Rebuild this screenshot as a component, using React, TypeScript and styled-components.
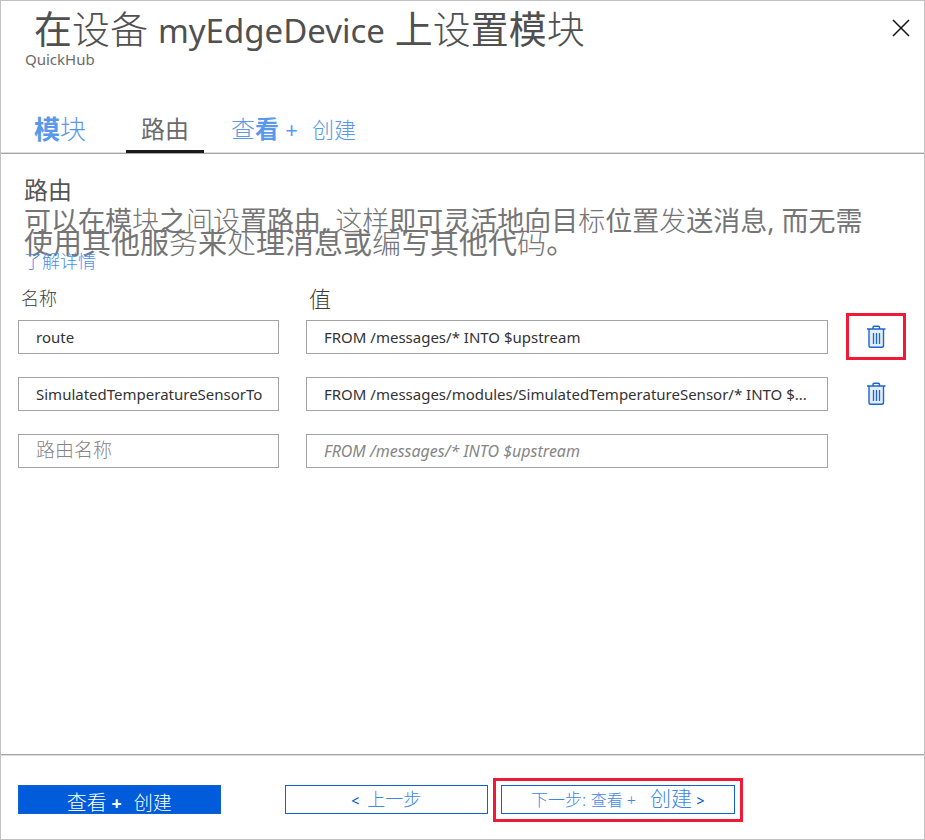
import React from "react";
import styled, { createGlobalStyle } from "styled-components";

const GlobalStyle = createGlobalStyle`
  *, *::before, *::after { box-sizing: border-box; }
  body {
    margin: 0;
    background: #fff;
    font-family: "Noto Sans", "Noto Sans CJK SC", sans-serif;
  }
  button, input { font-family: inherit; }
`;

const Blade = styled.div`
  display: flex;
  flex-direction: column;
  min-height: 100vh;
  border: 1px solid #c2c2c2;
  background: #fff;
`;

const Thin = styled.span`
  font-weight: 300;
`;

const Strong = styled.span`
  font-weight: 700;
`;

const Header = styled.header`
  display: flex;
  justify-content: space-between;
  align-items: flex-start;
  padding: 6px 14px 0 24px;
`;

const Title = styled.h1`
  margin: 0;
  padding-left: 9px;
  font-size: 38px;
  line-height: 42px;
  font-weight: 400;
  color: #505050;
  white-space: nowrap;
`;

const TitleName = styled.span`
  font-size: 33px;
`;

const Subtitle = styled.p`
  margin: 0;
  font-size: 15px;
  line-height: 14px;
  color: #6b6b6b;
`;

const CloseButton = styled.button`
  display: flex;
  margin-top: 12px;
  padding: 0;
  border: 0;
  background: none;
  cursor: pointer;
`;

const Tabs = styled.nav`
  display: flex;
  align-items: flex-end;
  gap: 14px;
  margin-top: 41px;
  padding-left: 20px;
  border-bottom: 1px solid #a6a6a6;
  box-shadow: inset 0 -1px 0 #dcdcdc;
`;

const Tab = styled.button<{ $active?: boolean; $size: number }>`
  height: 46px;
  padding: 0 ${(p) => (p.$active ? 15 : 13)}px;
  border: 0;
  border-bottom: 3px solid ${(p) => (p.$active ? "#1b1a19" : "transparent")};
  background: none;
  color: ${(p) => (p.$active ? "#6b6b6b" : "#5a98ec")};
  font-size: ${(p) => p.$size}px;
  line-height: 42px;
  white-space: nowrap;
  cursor: pointer;

  &:first-child {
    margin-right: 13px;
  }
`;

const Text = styled.span<{ $size: number; $gap?: number }>`
  font-size: ${(p) => p.$size}px;
  margin-left: ${(p) => p.$gap ?? 0}px;
`;

const Content = styled.main`
  flex: 1;
  padding: 20px 18px 0 17px;
`;

const Intro = styled.section`
  padding-left: 6px;
`;

const SectionTitle = styled.h2`
  margin: 0 0 4px;
  font-size: 24px;
  line-height: 32px;
  font-weight: 400;
  color: #555;
`;

const Description = styled.p`
  max-width: 850px;
  margin: 0;
  font-size: 27px;
  line-height: 22px;
  font-weight: 400;
  color: #757575;
`;

const LearnMore = styled.a`
  display: block;
  width: fit-content;
  margin-top: -5px;
  font-size: 18px;
  line-height: 22px;
  font-weight: 300;
  color: #4a8fe8;
  text-decoration: none;
`;

const RouteRow = styled.div`
  display: flex;
  align-items: center;
  gap: 18px;
  height: 57px;
`;

const Fields = styled.div`
  flex: 1;
  min-width: 0;
  display: grid;
  grid-template-columns: minmax(0, 1fr) minmax(0, 2fr);
  gap: 27px;
`;

const LabelRow = styled(RouteRow)`
  height: 20px;
  margin-top: 16px;
`;

const ColumnLabel = styled.div<{ $size: number }>`
  padding-left: 3px;
  font-size: ${(p) => p.$size}px;
  line-height: 20px;
  font-weight: 300;
  color: #3c3c3c;
`;

const Field = styled.input<{ $italic?: boolean }>`
  width: 100%;
  height: 34px;
  padding: 0 8px 0 17px;
  border: 1px solid #a3a3a3;
  border-radius: 0;
  background: #fff;
  color: #333;
  font-size: 15px;
  text-overflow: ellipsis;
  outline: none;

  &::placeholder {
    color: #868686;
    opacity: 1;
    font-style: ${(p) => (p.$italic ? "italic" : "normal")};
    font-size: ${(p) => (p.$italic ? 16 : 19)}px;
    font-weight: ${(p) => (p.$italic ? 400 : 300)};
  }
`;

const ActionCell = styled.div<{ $highlight?: boolean }>`
  display: flex;
  flex: none;
  align-items: center;
  justify-content: center;
  width: 60px;
  height: 47px;
  border: 3px solid ${(p) => (p.$highlight ? "#f01a37" : "transparent")};
`;

const IconButton = styled.button`
  display: flex;
  padding: 0;
  border: 0;
  background: none;
  cursor: pointer;
`;

const Footer = styled.footer`
  display: flex;
  align-items: center;
  height: 85px;
  padding: 5px 181px 0 17px;
  border-top: 1px solid #a6a6a6;
  box-shadow: inset 0 1px 0 #dcdcdc;
`;

const ActionButton = styled.button<{ $primary?: boolean }>`
  flex: 203 1 0;
  height: 29px;
  padding: ${(p) => (p.$primary ? 6 : 0)}px 0 0;
  border: 1px solid #0f62d0;
  background: ${(p) => (p.$primary ? "#005cdb" : "#fff")};
  color: ${(p) => (p.$primary ? "#fff" : "#3d86e6")};
  font-size: 18px;
  line-height: 20px;
  font-weight: 300;
  white-space: nowrap;
  cursor: pointer;
`;

const Spacer = styled.div`
  flex: 65 1 0;
`;

const Highlight = styled.div`
  display: flex;
  flex: 237 1 0;
  margin-left: 5px;
  padding: 4px 5px 5px;
  border: 3px solid #f01a37;
`;

const Arrow = styled.span`
  color: #0f62d0;
  font-size: 14px;
  font-weight: 500;
`;

function CloseIcon() {
  return (
    <svg width="18" height="18" viewBox="0 0 18 18" aria-hidden="true">
      <path d="M1 1L17 17M17 1L1 17" stroke="#111" strokeWidth="1.5" fill="none" />
    </svg>
  );
}

function TrashIcon() {
  return (
    <svg width="20" height="24" viewBox="0 0 20 24" fill="none" aria-hidden="true">
      <path d="M3 4V20.5Q3 22.3 4.8 22.3H15.7Q17.5 22.3 17.5 20.5V4" fill="#e3eefb" stroke="#1b66d2" strokeWidth="1.4" />
      <path d="M1 4H19.5M7 4V2.5Q7 1.2 8.3 1.2H12.2Q13.5 1.2 13.5 2.5V4" stroke="#1b66d2" strokeWidth="1.5" />
      <path d="M7.5 8V19M10.5 8V19M13.5 8V19" stroke="#1b66d2" strokeWidth="1.3" />
    </svg>
  );
}

const routes = [
  { name: "route", value: "FROM /messages/* INTO $upstream", highlight: true },
  {
    name: "SimulatedTemperatureSensorTo",
    value: "FROM /messages/modules/SimulatedTemperatureSensor/* INTO $...",
    highlight: false,
  },
];

export default function App() {
  return (
    <>
      <GlobalStyle />
      <Blade>
        <Header>
          <div>
            <Title>
              在<Thin>设备</Thin> <TitleName>myEdgeDevice</TitleName> 上<Thin>设</Thin>置模<Thin>块</Thin>
            </Title>
            <Subtitle>QuickHub</Subtitle>
          </div>
          <CloseButton type="button" aria-label="关闭">
            <CloseIcon />
          </CloseButton>
        </Header>

        <Tabs>
          <Tab type="button" $size={26}>
            <Strong>模</Strong>
            <Thin>块</Thin>
          </Tab>
          <Tab type="button" $size={24} $active>
            路由
          </Tab>
          <Tab type="button" $size={24}>
            <Thin>查</Thin>
            <Strong>看</Strong> <Text $size={22}>+</Text>
            <Text $size={22} $gap={14}>
              <Thin>创建</Thin>
            </Text>
          </Tab>
        </Tabs>

        <Content>
          <Intro>
            <SectionTitle>路由</SectionTitle>
            <Description>
              可以在模<Thin>块</Thin>之<Thin>间设</Thin>置路由, <Thin>这样</Thin>即可灵活地向目<Thin>标</Thin>位置
              <Thin>发</Thin>送消息, 而无需
              <Text $size={29}>
                使用其他服<Thin>务</Thin>来<Thin>处</Thin>理消息或<Thin>编</Thin>写其他代<Thin>码</Thin>。
              </Text>
            </Description>
            <LearnMore href="#">了解详情</LearnMore>
          </Intro>

          <LabelRow>
            <Fields>
              <ColumnLabel $size={18}>名称</ColumnLabel>
              <ColumnLabel $size={22}>值</ColumnLabel>
            </Fields>
            <ActionCell />
          </LabelRow>

          {routes.map((r) => (
            <RouteRow key={r.name}>
              <Fields>
                <Field aria-label="名称" defaultValue={r.name} />
                <Field aria-label="值" defaultValue={r.value} />
              </Fields>
              <ActionCell $highlight={r.highlight}>
                <IconButton type="button" aria-label="删除">
                  <TrashIcon />
                </IconButton>
              </ActionCell>
            </RouteRow>
          ))}
          <RouteRow>
            <Fields>
              <Field aria-label="名称" placeholder="路由名称" />
              <Field aria-label="值" placeholder="FROM /messages/* INTO $upstream" $italic />
            </Fields>
            <ActionCell />
          </RouteRow>
        </Content>

        <Footer>
          <ActionButton type="button" $primary>
            <Text $size={20}>查看</Text> <Strong>+</Strong>
            <Text $size={19} $gap={12}>
              创建
            </Text>
          </ActionButton>
          <Spacer />
          <ActionButton type="button">
            <Arrow>&lt;</Arrow>
            <Text $size={18} $gap={8}>
              上一步
            </Text>
          </ActionButton>
          <Highlight>
            <ActionButton type="button">
              <Text $size={17}>下一步: </Text>
              <Text $size={16}>查看 +</Text>
              <Text $size={21} $gap={14}>
                创建
              </Text>{" "}
              <Arrow>&gt;</Arrow>
            </ActionButton>
          </Highlight>
        </Footer>
      </Blade>
    </>
  );
}
